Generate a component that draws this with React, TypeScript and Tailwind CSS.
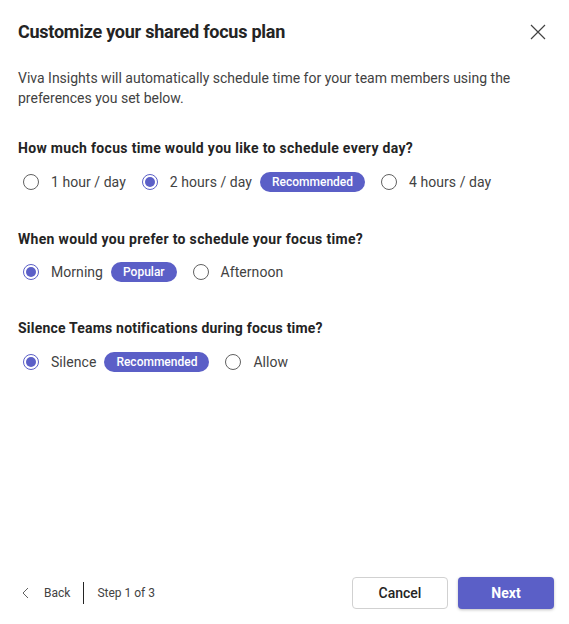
import React from "react";

function Radio({ checked, label }: { checked?: boolean; label: string }) {
  return (
    <div className="flex items-center">
      <span
        className={
          checked
            ? "flex h-4 w-4 items-center justify-center rounded-full border border-[#5b5fc7]"
            : "flex h-4 w-4 items-center justify-center rounded-full border border-[#616161]"
        }
      >
        {checked && <span className="h-[10px] w-[10px] rounded-full bg-[#5b5fc7]" />}
      </span>
      <span className="ml-3 text-[14px] leading-5 tracking-[0.05px] text-[#424242]">{label}</span>
    </div>
  );
}

function Pill({ text }: { text: string }) {
  return (
    <span className="flex h-5 items-center rounded-full bg-[#5b5fc7] px-3 text-[12px] font-medium leading-4 text-white">
      {text}
    </span>
  );
}

export default function App() {
  return (
    <div
      className="flex h-[624px] w-[569px] flex-col bg-white text-[#242424]"
      style={{ fontFamily: '"Segoe UI", Roboto, sans-serif' }}
    >
      <div className="flex items-center justify-between pl-[18px] pr-[23px] pt-[20px]">
        <h1 className="text-[18px] font-bold leading-6 tracking-[-0.25px] text-[#242424]">Customize your shared focus plan</h1>
        <svg width="16" height="16" viewBox="0 0 16 16" fill="none" stroke="#424242" strokeWidth="1.2">
          <path d="M1 1L15 15M15 1L1 15" />
        </svg>
      </div>
      <div className="flex-1 px-[18px]">
        <p className="mt-[24px] text-[14px] leading-5 text-[#424242]">
          Viva Insights will automatically schedule time for your team members using the preferences you set below.
        </p>

        <h2 className="mt-[30px] text-[14px] font-bold leading-5 tracking-[0.32px]">How much focus time would you like to schedule every day?</h2>
        <div className="mt-[14px] flex items-center pl-[5px]">
          <Radio label="1 hour / day" />
          <div className="ml-[16px]">
            <Radio checked label="2 hours / day" />
          </div>
          <div className="ml-2">
            <Pill text="Recommended" />
          </div>
          <div className="ml-[16px]">
            <Radio label="4 hours / day" />
          </div>
        </div>

        <h2 className="mt-[37px] text-[14px] font-bold leading-5 tracking-[0.32px]">When would you prefer to schedule your focus time?</h2>
        <div className="mt-[13px] flex items-center pl-[5px]">
          <Radio checked label="Morning" />
          <div className="ml-2">
            <Pill text="Popular" />
          </div>
          <div className="ml-[16px]">
            <Radio label="Afternoon" />
          </div>
        </div>

        <h2 className="mt-[36px] text-[14px] font-bold leading-5 tracking-[0.2px]">Silence Teams notifications during focus time?</h2>
        <div className="mt-[14px] flex items-center pl-[5px]">
          <Radio checked label="Silence" />
          <div className="ml-2">
            <Pill text="Recommended" />
          </div>
          <div className="ml-[16px]">
            <Radio label="Allow" />
          </div>
        </div>
      </div>

      <div className="flex items-center justify-between pb-[15px] pl-[20px] pr-[15px]">
        <div className="flex items-center text-[12px] text-[#424242]">
          <svg width="12" height="12" viewBox="0 0 12 12" fill="none" stroke="#616161" strokeWidth="1">
            <path d="M8 1L3 6L8 11" />
          </svg>
          <span className="ml-[12px]">Back</span>
          <span className="mx-[13px] h-[22px] w-px bg-[#242424]" />
          <span>Step 1 of 3</span>
        </div>
        <div className="flex items-center gap-[10px]">
          <button className="h-[32px] w-[96px] rounded border border-[#d1d1d1] bg-white text-[14px] font-medium text-[#242424]">
            Cancel
          </button>
          <button className="h-[32px] w-[96px] rounded bg-[#5b5fc7] text-[14px] font-bold text-white shadow-[0_1px_3px_rgba(0,0,0,0.25)]">
            Next
          </button>
        </div>
      </div>
    </div>
  );
}
